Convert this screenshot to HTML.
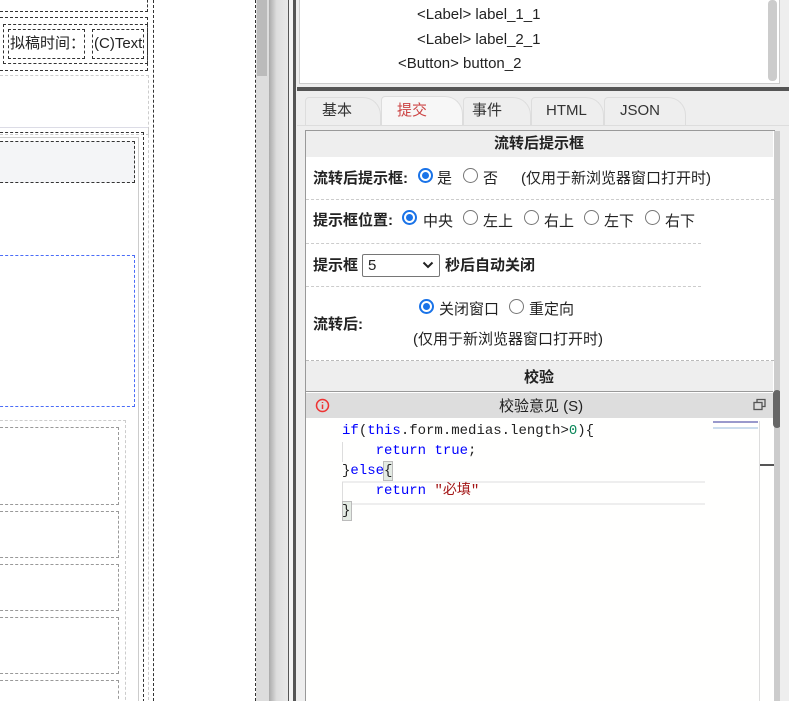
<!DOCTYPE html>
<html><head><meta charset="utf-8"><style>
*{box-sizing:border-box;margin:0;padding:0}
html,body{width:789px;height:701px;overflow:hidden}
body{background:#fff;position:relative;font-family:"Liberation Sans","Noto Sans CJK SC",sans-serif;font-size:15px;color:#222}
.a{position:absolute}
.dk{border:1px dashed #333}
.gd{border:1px dashed #999}
.lg{border:1px dashed #ccc}
.t{position:absolute;white-space:nowrap;line-height:1}
.rb{position:absolute;width:15px;height:15px;border-radius:50%;border:1px solid #767676;background:#fff}
.rb.on{border:2px solid #1a73e8;}
.rb.on:after{content:"";position:absolute;left:2px;top:2px;width:7px;height:7px;border-radius:50%;background:#1a73e8}
.b{font-weight:bold}
.code{font-family:"Liberation Mono","DejaVu Sans Mono","Noto Sans CJK SC",monospace;font-size:14px;position:absolute;white-space:pre;line-height:20px}
.kw{color:#00f}
</style></head><body>
<div class="a" style="left:-5px;top:-5px;width:153px;height:17px;border:1px dashed #333"></div>
<div class="a dk" style="left:-5px;top:17px;width:153px;height:54px"></div>
<div class="a dk" style="left:3px;top:24px;width:145px;height:40px"></div>
<div class="a dk" style="left:8px;top:29px;width:77px;height:30px"></div>
<div class="t" style="left:10px;top:36px;font-size:15px">拟稿时间：</div>
<div class="a dk" style="left:92px;top:29px;width:52px;height:30px"></div>
<div class="t" style="left:94px;top:36px;font-size:15px">(C)Text</div>
<div class="a lg" style="left:-5px;top:75px;width:154px;height:60px"></div>
<div class="a" style="left:0;top:127px;width:148px;height:1px;background:#dcdce6"></div>
<div class="a dk" style="left:-5px;top:132px;width:149px;height:580px"></div>
<div class="a" style="left:-5px;top:137px;width:144px;height:580px;border:1px solid #ccc"></div>
<div class="a dk" style="left:-5px;top:141px;width:140px;height:42px;background:#f4f5f7"></div>
<div class="a" style="left:-5px;top:255px;width:140px;height:152px;border:1px dashed #4a6cf7"></div>
<div class="a lg" style="left:-5px;top:420px;width:131px;height:300px"></div>
<div class="a gd" style="left:-5px;top:427px;width:124px;height:78px"></div>
<div class="a gd" style="left:-5px;top:511px;width:124px;height:47px"></div>
<div class="a gd" style="left:-5px;top:564px;width:124px;height:47px"></div>
<div class="a gd" style="left:-5px;top:617px;width:124px;height:57px"></div>
<div class="a gd" style="left:-5px;top:680px;width:124px;height:40px"></div>
<div class="a" style="left:148px;top:130px;width:1px;height:580px;border-left:1px dashed #ccc"></div>
<div class="a" style="left:153px;top:0;width:1px;height:701px;border-left:1px dashed #333"></div>
<div class="a" style="left:255px;top:0;width:1px;height:701px;border-left:1px dashed #333"></div>
<div class="a" style="left:256px;top:0;width:13px;height:701px;background:#ddd"></div>
<div class="a" style="left:257px;top:0;width:10px;height:76px;background:#bbb"></div>
<div class="a" style="left:269px;top:0;width:19px;height:701px;background:linear-gradient(90deg,#aaa,#ddd 40%,#e8e8e8)"></div>
<div class="a" style="left:288px;top:0;width:1px;height:701px;background:#555"></div>
<div class="a" style="left:289px;top:0;width:4px;height:701px;background:#f4f4f4"></div>
<div class="a" style="left:293px;top:0;width:3px;height:701px;background:#555"></div>
<div class="a" style="left:296px;top:0;width:493px;height:701px;background:#eee"></div>
<div class="a" style="left:299px;top:-2px;width:481px;height:86px;background:#fff;border:1px solid #ccc"></div>
<div class="a" style="left:768px;top:0;width:9px;height:81px;background:#ccc;border-radius:4px"></div>
<div class="t" style="left:417px;top:7px;font-size:15px">&lt;Label&gt; label_1_1</div>
<div class="t" style="left:417px;top:32px;font-size:15px">&lt;Label&gt; label_2_1</div>
<div class="t" style="left:398px;top:56px;font-size:15px">&lt;Button&gt; button_2</div>
<div class="a" style="left:297px;top:87px;width:492px;height:4px;background:#555"></div>
<div class="a" style="left:305px;top:97px;width:76px;height:28px;border:1px solid #ddd;border-bottom:0;border-radius:4px 18px 0 0;background:#eee"></div>
<div class="a" style="left:381px;top:96px;width:82px;height:30px;border:1px solid #ddd;border-bottom:0;border-radius:4px 18px 0 0;background:#f7f7f7"></div>
<div class="a" style="left:463px;top:97px;width:68px;height:28px;border:1px solid #ddd;border-bottom:0;border-radius:4px 18px 0 0"></div>
<div class="a" style="left:531px;top:97px;width:73px;height:28px;border:1px solid #ddd;border-bottom:0;border-radius:4px 18px 0 0"></div>
<div class="a" style="left:604px;top:97px;width:82px;height:28px;border:1px solid #ddd;border-bottom:0;border-radius:4px 18px 0 0"></div>
<div class="a" style="left:297px;top:125px;width:492px;height:1px;background:#ddd"></div>
<div class="t" style="left:322px;top:103px;color:#333">基本</div>
<div class="t" style="left:397px;top:103px;color:#c44">提交</div>
<div class="t" style="left:472px;top:103px;color:#333">事件</div>
<div class="t" style="left:546px;top:103px;color:#333">HTML</div>
<div class="t" style="left:620px;top:103px;color:#333">JSON</div>
<div class="a" style="left:305px;top:130px;width:470px;height:580px;background:#fff;border:1px solid #999"></div>
<div class="a" style="left:306px;top:131px;width:467px;height:26px;background:#eee"></div>
<div class="t b" style="left:494px;top:136px">流转后提示框</div>
<div class="a" style="left:774px;top:131px;width:6px;height:580px;background:#ccc"></div>
<div class="t b" style="left:313px;top:171px">流转后提示框:</div>
<div class="rb on" style="left:418px;top:168px"></div><div class="t" style="left:437px;top:171px">是</div>
<div class="rb" style="left:463px;top:168px"></div><div class="t" style="left:483px;top:171px">否</div>
<div class="t" style="left:521px;top:171px">(仅用于新浏览器窗口打开时)</div>
<div class="a" style="left:306px;top:199px;width:468px;border-top:1px dashed #ccc"></div>
<div class="t b" style="left:313px;top:213px">提示框位置:</div>
<div class="rb on" style="left:402px;top:210px"></div><div class="t" style="left:423px;top:214px">中央</div>
<div class="rb" style="left:463px;top:210px"></div><div class="t" style="left:483px;top:214px">左上</div>
<div class="rb" style="left:524px;top:210px"></div><div class="t" style="left:544px;top:214px">右上</div>
<div class="rb" style="left:584px;top:210px"></div><div class="t" style="left:604px;top:214px">左下</div>
<div class="rb" style="left:645px;top:210px"></div><div class="t" style="left:665px;top:214px">右下</div>
<div class="a" style="left:306px;top:243px;width:395px;border-top:1px dashed #ccc"></div>
<div class="t b" style="left:313px;top:258px">提示框</div>
<div class="a" style="left:362px;top:254px;width:78px;height:23px;border:1px solid #767676;border-radius:2px"></div>
<div class="t" style="left:368px;top:258px;font-size:15px">5</div>
<svg class="a" style="left:422px;top:261px" width="12" height="8"><path d="M1.5 1.5L6 6L10.5 1.5" stroke="#222" stroke-width="2" fill="none"/></svg>
<div class="t b" style="left:445px;top:258px">秒后自动关闭</div>
<div class="a" style="left:306px;top:286px;width:395px;border-top:1px dashed #ccc"></div>
<div class="rb on" style="left:419px;top:299px"></div><div class="t" style="left:439px;top:302px">关闭窗口</div>
<div class="rb" style="left:509px;top:299px"></div><div class="t" style="left:529px;top:302px">重定向</div>
<div class="t b" style="left:313px;top:317px">流转后:</div>
<div class="t" style="left:413px;top:332px">(仅用于新浏览器窗口打开时)</div>
<div class="a" style="left:306px;top:360px;width:468px;height:1px;border-top:1px dashed #bbb"></div>
<div class="a" style="left:306px;top:361px;width:467px;height:31px;background:#eee;border-bottom:1px solid #999"></div>
<div class="t b" style="left:524px;top:370px">校验</div>
<div class="a" style="left:306px;top:393px;width:467px;height:25px;background:#ddd"></div>
<svg class="a" style="left:315px;top:398px" width="15" height="15"><circle cx="7.5" cy="7.5" r="6" stroke="#e33" stroke-width="1.5" fill="none"/><path d="M7.5 4v1M7.5 6.5v4.5" stroke="#e33" stroke-width="1.5"/></svg>
<div class="t" style="left:499px;top:399px">校验意见 (S)</div>
<svg class="a" style="left:753px;top:398px" width="14" height="14"><rect x="1" y="4.5" width="8" height="7" fill="none" stroke="#555" stroke-width="1.3"/><path d="M4 4.5V1.5H12V8.5H9" fill="none" stroke="#555" stroke-width="1.3"/></svg>
<div class="a" style="left:306px;top:418px;width:467px;height:290px;background:#fffffe"></div>
<div class="a" style="left:342px;top:481px;width:363px;height:24px;border-top:2px solid #eee;border-bottom:2px solid #eee"></div>
<div class="a" style="left:342px;top:442px;width:1px;height:20px;background:#ddd"></div>
<div class="a" style="left:342px;top:482px;width:1px;height:20px;background:#ddd"></div>
<div class="a" style="left:383px;top:461px;width:10px;height:20px;background:#e4ebe4;border:1px solid #bbb"></div>
<div class="a" style="left:342px;top:501px;width:10px;height:20px;background:#e4ebe4;border:1px solid #bbb"></div>
<div class="code" style="left:342px;top:421px"><span class="kw">if</span>(<span class="kw">this</span>.form.medias.length&gt;<span style="color:#098658">0</span>){
    <span class="kw">return</span> <span class="kw">true</span>;
}<span class="kw">else</span>{
    <span class="kw">return</span> <span style="color:#a31515">"必填"</span>
}</div>
<div class="a" style="left:713px;top:421px;width:45px;height:2px;background:#99c"></div>
<div class="a" style="left:713px;top:427px;width:45px;height:2px;background:#cde"></div>
<div class="a" style="left:759px;top:421px;width:1px;height:290px;background:#ddd"></div>
<div class="a" style="left:760px;top:464px;width:14px;height:2px;background:#555"></div>
<div class="a" style="left:773px;top:390px;width:8px;height:38px;background:#666;border-radius:4px"></div>
<div class="a" style="left:780px;top:131px;width:9px;height:580px;background:#eee"></div>
</body></html>
